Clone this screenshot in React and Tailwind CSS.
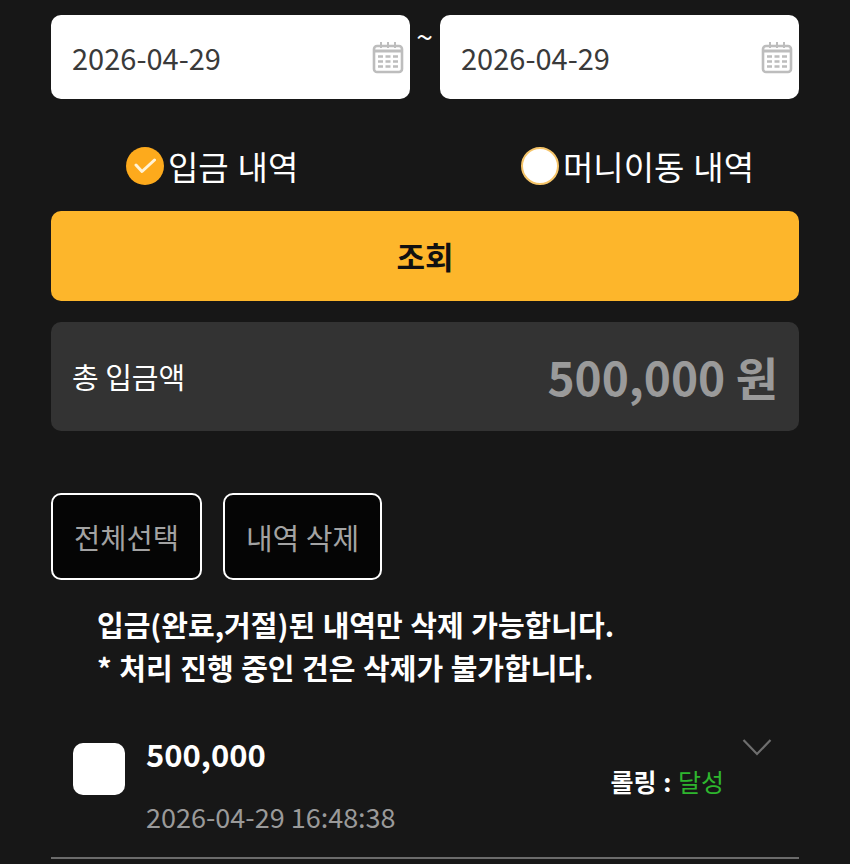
const font = { fontFamily: '"Noto Sans CJK KR", "Noto Sans", sans-serif' }

function CalendarIcon() {
  return (
    <svg width="32" height="33" viewBox="0 0 32 33" fill="none" className="shrink-0">
      <rect x="2" y="5" width="28" height="26" rx="3" stroke="#bdbdbd" strokeWidth="2.6" />
      <path d="M2 10h28" stroke="#bdbdbd" strokeWidth="3" />
      <path d="M9 1v6M16 1v6M23 1v6" stroke="#bdbdbd" strokeWidth="2" />
      <path d="M6 15.500h5M13.500 15.500h5M21 15.500h5M6 20.500h5M13.500 20.500h5M21 20.500h5M6 25.500h5M13.500 25.500h5M21 25.500h5" stroke="#bdbdbd" strokeWidth="2.600" />
    </svg>
  )
}

function DateBox() {
  return (
    <div className="flex-1 h-[84px] bg-white rounded-[10px] flex items-center justify-between pl-[21px] pr-[6px]">
      <span className="text-[29px] leading-none text-[#3a3a3a]">2026-04-29</span>
      <CalendarIcon />
    </div>
  )
}

export default function App() {
  return (
    <div style={font} className="w-[850px] h-[864px] overflow-hidden bg-[#171717] px-[51px] pt-[15px]">
      <div className="flex">
        <DateBox />
        <div className="w-[30px] pr-[1px] text-center text-white text-[30px] leading-[40px]">~</div>
        <DateBox />
      </div>

      <div className="flex h-[112px] items-center pt-[22px] [word-spacing:1.500px]">
        <div className="flex items-center ml-[75px] w-[395px]">
          <span className="w-[38px] h-[38px] rounded-full bg-[#fdaa1c] flex items-center justify-center">
            <svg width="22" height="16" viewBox="0 0 22 16" fill="none">
              <path d="M2 7l6 6.500L20.500 2" stroke="#fff3d6" strokeWidth="3" strokeLinecap="round" strokeLinejoin="round" />
            </svg>
          </span>
          <span className="text-white text-[33px] leading-none ml-[4px]">입금 내역</span>
        </div>
        <div className="flex items-center">
          <span className="w-[38px] h-[38px] rounded-full bg-white border-2 border-[#f5c469]" />
          <span className="text-white text-[33px] leading-none ml-[4px]">머니이동 내역</span>
        </div>
      </div>

      <button className="w-full h-[90px] rounded-[10px] bg-[#fdb62b] text-[#111] text-[31px] font-bold">조회</button>

      <div className="mt-[21px] h-[109px] rounded-[10px] bg-[#333333] flex items-center justify-between px-[21px]">
        <span className="text-white text-[29px]">총 입금액</span>
        <span className="text-[#9a9a9a] text-[46px] font-bold">500,000 원</span>
      </div>

      <div className="flex gap-[21px] mt-[62px]">
        <button className="w-[151px] h-[87px] pt-[2px] rounded-[10px] bg-[#050505] border-2 border-white text-[#a3a3a3] text-[28.500px]">전체선택</button>
        <button className="w-[159px] h-[87px] pt-[2px] rounded-[10px] bg-[#050505] border-2 border-white text-[#a3a3a3] text-[29px]">내역 삭제</button>
      </div>

      <div className="mt-[23px] pl-[46px] text-white text-[29px] font-bold leading-[43px] [word-spacing:1px]">
        <p>입금(완료,거절)된 내역만 삭제 가능합니다.</p>
        <p>* 처리 진행 중인 건은 삭제가 불가합니다.</p>
      </div>

      <div className="relative mt-[34px] h-[136px] border-b-2 border-[#6b6b6b]">
        <div className="flex items-start">
          <div className="ml-[22px] mt-[20px] w-[52px] h-[52px] rounded-[10px] bg-white" />
          <div className="ml-[21px]">
            <p className="text-white text-[31px] font-bold leading-[46px] mt-[8px]">500,000</p>
            <p className="text-[#9a9a9a] text-[27px] leading-[40px] mt-[20px]">2026-04-29 16:48:38</p>
          </div>
          <div className="ml-auto mr-[75px] mt-[40px] text-[25px] leading-[36px] font-bold text-white [word-spacing:1px]">
            롤링 : <span className="font-normal text-[#2eb52e]">달성</span>
          </div>
        </div>
        <svg width="30" height="18" viewBox="0 0 30 18" fill="none" className="absolute right-[27px] top-[15px]">
          <path d="M1.500 2l13.500 14L28.500 2" stroke="#6e6e6e" strokeWidth="2.200" />
        </svg>
      </div>
    </div>
  )
}
